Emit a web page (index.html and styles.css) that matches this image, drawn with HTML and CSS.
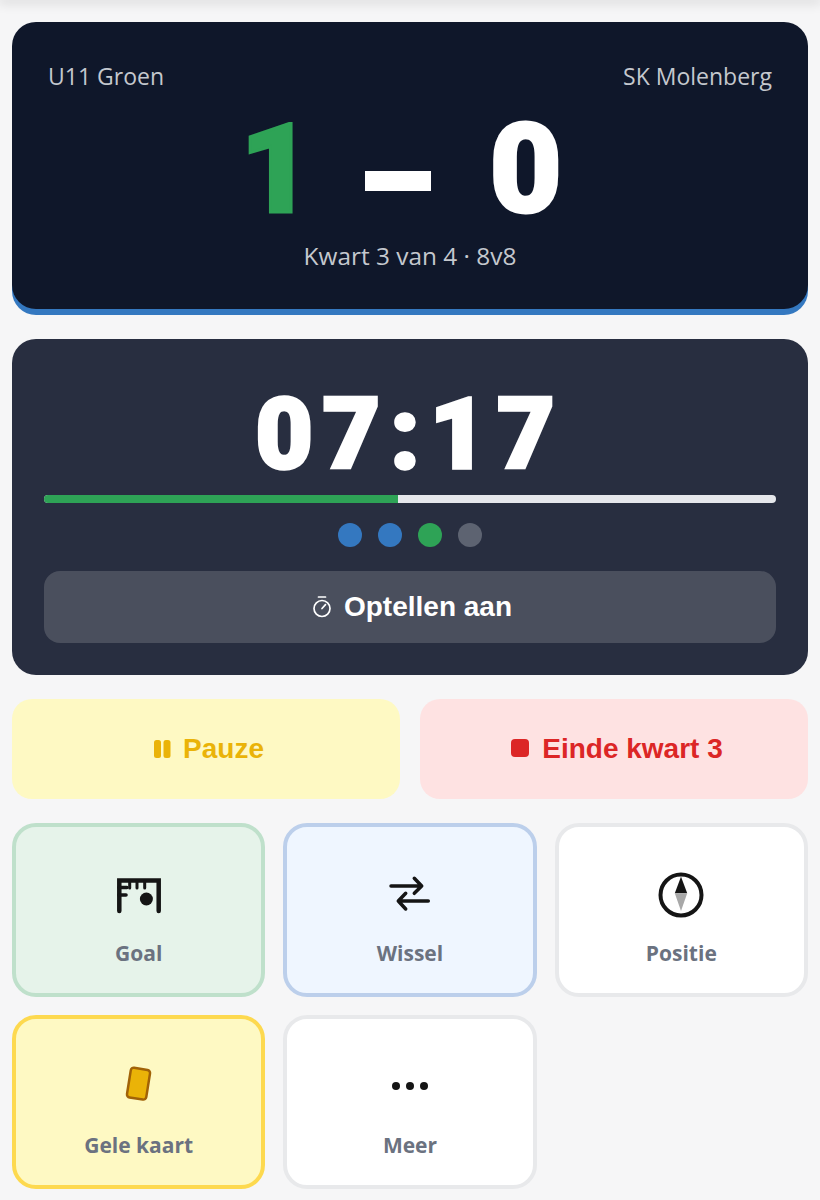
FILE: index.html
```html
<!DOCTYPE html>
<html lang="en">

<head>
    <meta charset="UTF-8">
    <meta name="viewport" content="width=device-width, initial-scale=1.0">
    <title>Wedstrijd</title>
    <link rel="stylesheet" href="styles.css">
</head>

<body>
    <div class="topbar"></div>
    <div class="app">
        <div class="score-card">
            <div class="teams">
                <span>U11 Groen</span>
                <span>SK Molenberg</span>
            </div>
            <div class="score">
                <span class="score-home">1</span>
                <span class="score-dash"></span>
                <span class="score-away">0</span>
            </div>
            <div class="score-meta">Kwart 3 van 4 · 8v8</div>
        </div>

        <div class="timer-card">
            <div class="clock">07:17</div>
            <div class="progress">
                <div class="progress-fill" style="width: 48.4%;"></div>
            </div>
            <div class="dots">
                <span class="dot dot-done"></span>
                <span class="dot dot-done"></span>
                <span class="dot dot-now"></span>
                <span class="dot"></span>
            </div>
            <button class="count-button">
                <svg width="20" height="26" viewBox="0 0 20 26" fill="none" stroke="currentColor" stroke-width="1.7" stroke-linecap="round">
                    <path d="M6.500 3h7"/>
                    <circle cx="10" cy="14.500" r="8"/>
                    <path d="M10 14.500l3.500-3.800"/>
                </svg>
                <span>Optellen aan</span>
            </button>
        </div>

        <div class="main-actions">
            <button class="action action-pause">
                <svg width="18" height="20" viewBox="0 0 18 20" fill="currentColor">
                    <rect x="1" y="1" width="7" height="18" rx="2.500"/>
                    <rect x="10.500" y="1" width="7" height="18" rx="2.500"/>
                </svg>
                <span>Pauze</span>
            </button>
            <button class="action action-end">
                <svg width="20" height="20" viewBox="0 0 20 20" fill="currentColor">
                    <rect x="1" y="0" width="18" height="18" rx="4"/>
                </svg>
                <span>Einde kwart 3</span>
            </button>
        </div>

        <div class="tiles">
            <div class="tile tile-goal">
                <svg class="tile-icon" width="50" height="50" viewBox="0 0 50 50" fill="none" stroke="#151515" stroke-linecap="round">
                    <g transform="translate(3 8)">
                        <path d="M2.300 33V2.500H41.700V33" stroke-width="4.500"/>
                        <path d="M2 9.500H10M2 17H9" stroke-width="3.600"/>
                        <path d="M12.700 3V10M20 3V10M27.700 3V10" stroke-width="3"/>
                        <circle cx="29.400" cy="21" r="6.500" fill="#151515" stroke="none"/>
                    </g>
                </svg>
                <span class="tile-label">Goal</span>
            </div>
            <div class="tile tile-sub">
                <svg class="tile-icon" width="50" height="50" viewBox="0 0 50 50" fill="none" stroke="#151515" stroke-width="3.500" stroke-linecap="round" stroke-linejoin="round">
                    <path d="M6 16H36.700M29.300 8.300L36.700 16L29.300 23.300"/>
                    <path d="M43.300 31H13.300M20.700 23.300L13.300 31L20.700 39"/>
                </svg>
                <span class="tile-label">Wissel</span>
            </div>
            <div class="tile">
                <svg class="tile-icon" width="50" height="50" viewBox="0 0 50 50" fill="none">
                    <circle cx="25" cy="25" r="20.500" stroke="#151515" stroke-width="4"/>
                    <path d="M25 6.700L18.800 23.300H31.200Z" fill="#151515"/>
                    <path d="M18.800 23.300L25 41L31.200 23.300Z" fill="#a8a8a8"/>
                </svg>
                <span class="tile-label">Positie</span>
            </div>
            <div class="tile tile-card">
                <svg class="tile-icon" width="50" height="50" viewBox="0 0 50 50">
                    <rect x="14.800" y="6.700" width="19.500" height="30" rx="3" transform="rotate(9 24.500 21.500)" fill="#eab308" stroke="#a16207" stroke-width="2.500"/>
                </svg>
                <span class="tile-label">Gele kaart</span>
            </div>
            <div class="tile">
                <svg class="tile-icon" width="50" height="50" viewBox="0 0 50 50" fill="#151515">
                    <circle cx="11" cy="24" r="4"/>
                    <circle cx="25" cy="24" r="4"/>
                    <circle cx="39" cy="24" r="4"/>
                </svg>
                <span class="tile-label">Meer</span>
            </div>
        </div>
    </div>
</body>

</html>
```
FILE: styles.css
```css
body,
html {
    margin: 0;
    padding: 0;
    height: 100%;
    overflow: hidden;
    background-color: #f6f6f7;
    font-family: "Open Sans", "Noto Sans", sans-serif;
}

.topbar {
    height: 0;
    box-shadow: 0 0 12px 2px rgba(0, 0, 0, 0.22);
}

.app {
    display: flex;
    flex-direction: column;
    gap: 24px;
    padding: 22px 12px 0;
}

.score-card {
    display: flex;
    flex-direction: column;
    height: 287px;
    box-sizing: border-box;
    margin-bottom: 6px;
    padding: 38px 36px 0;
    background-color: #0f172a;
    border-radius: 24px;
    box-shadow: 0 6px 0 #3478c0;
    color: #c4c8ce;
}

.teams {
    display: flex;
    justify-content: space-between;
    font-size: 23px;
    line-height: 32px;
}

.score {
    display: flex;
    justify-content: center;
    align-items: center;
    gap: 52px;
    height: 120px;
    margin-top: 18px;
    padding-right: 18px;
    font-family: Roboto, "Liberation Sans", sans-serif;
    font-size: 125px;
    line-height: 120px;
    font-weight: 900;
    color: white;
    -webkit-text-stroke: 3px currentColor;
}

.score-home {
    color: #2ea356;
}

.score-dash {
    width: 66px;
    height: 20px;
    margin-top: 22px;
    background-color: white;
}

.score-away {
    margin-left: 7px;
}

.score-meta {
    margin-top: 10px;
    text-align: center;
    font-size: 24.400px;
    line-height: 32px;
}

.timer-card {
    display: flex;
    flex-direction: column;
    height: 336px;
    box-sizing: border-box;
    padding: 32px;
    background-color: #282e40;
    border-radius: 24px;
}

.clock {
    height: 124px;
    text-align: center;
    font-family: Roboto, "Liberation Sans", sans-serif;
    font-size: 99px;
    line-height: 127px;
    font-weight: 900;
    letter-spacing: 10px;
    color: white;
    -webkit-text-stroke: 3.500px white;
}

.progress {
    height: 8px;
    background-color: #e5e7eb;
    border-radius: 4px;
    overflow: hidden;
}

.progress-fill {
    height: 100%;
    background-color: #2ea356;
}

.dots {
    display: flex;
    justify-content: center;
    gap: 16px;
    margin-top: 20px;
}

.dot {
    width: 24px;
    height: 24px;
    border-radius: 50%;
    background-color: #5d6371;
}

.dot-done {
    background-color: #3478c0;
}

.dot-now {
    background-color: #2ea356;
}

.count-button {
    display: flex;
    align-items: center;
    justify-content: center;
    gap: 12px;
    height: 72px;
    margin-top: 24px;
    padding: 0 0 0 4px;
    border: none;
    border-radius: 16px;
    background-color: #4a4f5d;
    color: white;
    font-family: "Liberation Sans", Arial, sans-serif;
    font-size: 28px;
    font-weight: bold;
}

.main-actions {
    display: grid;
    grid-template-columns: 1fr 1fr;
    gap: 20px;
}

.action {
    display: flex;
    align-items: center;
    justify-content: center;
    gap: 12px;
    height: 100px;
    padding: 0 0 0 5px;
    border: none;
    border-radius: 20px;
    font-family: "Liberation Sans", Arial, sans-serif;
    font-size: 28px;
    font-weight: bold;
}

.action-pause {
    background-color: #fef9c3;
    color: #eab308;
}

.action-end {
    background-color: #fee2e2;
    color: #dc2626;
}

.tiles {
    display: grid;
    grid-template-columns: repeat(3, 1fr);
    grid-auto-rows: 174px;
    gap: 18px;
}

.tile {
    display: flex;
    flex-direction: column;
    align-items: center;
    gap: 19px;
    box-sizing: border-box;
    padding-top: 43px;
    border: 4px solid #e8e9eb;
    border-radius: 24px;
    background-color: white;
}

.tile-goal {
    background-color: #e6f3ea;
    border-color: #bfe0cb;
}

.tile-sub {
    background-color: #eff6ff;
    border-color: #bccfeb;
}

.tile-card {
    background-color: #fef9c3;
    border-color: #fdd94f;
}

.tile-label {
    font-size: 21px;
    line-height: 28px;
    font-weight: 700;
    color: #6b7280;
}
```
